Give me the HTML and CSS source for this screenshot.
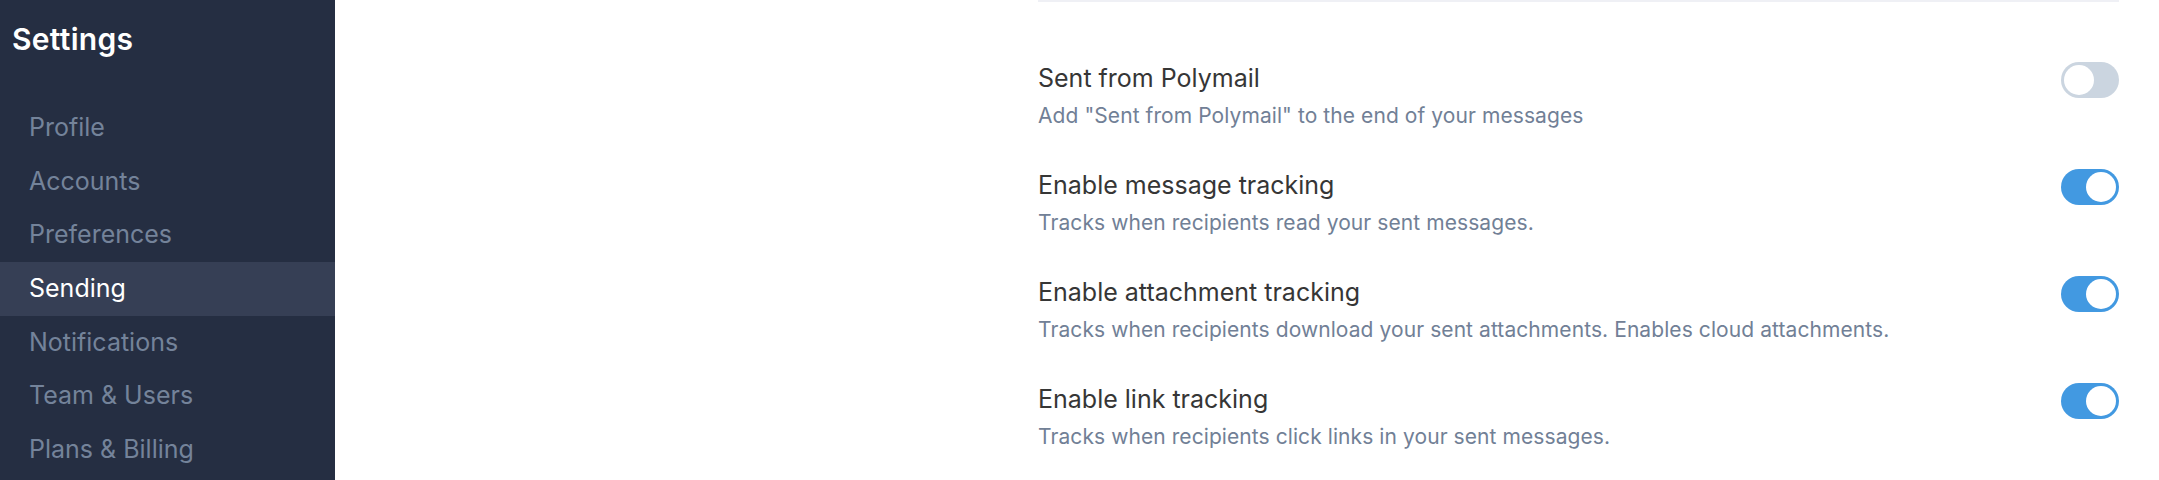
FILE: index.html
```html
<!DOCTYPE html>
<html lang="en">
<head>
<meta charset="utf-8">
<title>Settings</title>
<link rel="stylesheet" href="styles.css">
</head>
<body>
<div class="app">
  <aside class="sidebar">
    <h1 class="sidebar-title">Settings</h1>
    <nav class="nav">
      <a class="nav-item">Profile</a>
      <a class="nav-item">Accounts</a>
      <a class="nav-item">Preferences</a>
      <a class="nav-item active">Sending</a>
      <a class="nav-item">Notifications</a>
      <a class="nav-item">Team &amp; Users</a>
      <a class="nav-item">Plans &amp; Billing</a>
    </nav>
  </aside>
  <main class="main">
    <div class="spacer"></div>
    <section class="panel">
      <div class="divider"></div>
      <div class="rows">
        <div class="row">
          <div class="row-text">
            <div class="row-title">Sent from Polymail</div>
            <div class="row-desc">Add "Sent from Polymail" to the end of your messages</div>
          </div>
          <span class="toggle"><span class="knob"></span></span>
        </div>
        <div class="row">
          <div class="row-text">
            <div class="row-title">Enable message tracking</div>
            <div class="row-desc">Tracks when recipients read your sent messages.</div>
          </div>
          <span class="toggle on"><span class="knob"></span></span>
        </div>
        <div class="row">
          <div class="row-text">
            <div class="row-title">Enable attachment tracking</div>
            <div class="row-desc">Tracks when recipients download your sent attachments. Enables cloud attachments.</div>
          </div>
          <span class="toggle on"><span class="knob"></span></span>
        </div>
        <div class="row">
          <div class="row-text">
            <div class="row-title">Enable link tracking</div>
            <div class="row-desc">Tracks when recipients click links in your sent messages.</div>
          </div>
          <span class="toggle on"><span class="knob"></span></span>
        </div>
      </div>
    </section>
  </main>
</div>
</body>
</html>
```

FILE: styles.css
```css
* { box-sizing: border-box; }
html, body {
  margin: 0;
  padding: 0;
  height: 100%;
  overflow: hidden;
  background: #ffffff;
  font-family: Inter, "Noto Sans", "Liberation Sans", sans-serif;
}
.app {
  display: flex;
  height: 480px;
}
.sidebar {
  width: 335px;
  flex: none;
  background: #252e42;
  padding-top: 21px;
}
.sidebar-title {
  margin: 0;
  padding-left: 12px;
  font-size: 30px;
  line-height: 36px;
  font-weight: 600;
  letter-spacing: 0.3px;
  color: #ffffff;
}
.nav {
  display: flex;
  flex-direction: column;
  margin-top: 44px;
}
.nav-item {
  display: block;
  height: 53.7px;
  line-height: 53.7px;
  padding-left: 29px;
  font-size: 25px;
  color: #74839a;
  text-decoration: none;
}
.nav-item.active {
  background: #363f55;
  color: #ffffff;
}
.main {
  flex: 1;
  display: flex;
  padding-right: 40px;
}
.spacer {
  flex: 1;
}
.panel {
  width: 1081px;
  flex: none;
}
.divider {
  height: 2px;
  background: #eff0f5;
}
.rows {
  display: flex;
  flex-direction: column;
  gap: 36px;
  padding-top: 58px;
}
.row {
  display: flex;
  justify-content: space-between;
  align-items: flex-start;
  height: 71px;
}
.row-title {
  font-size: 25px;
  line-height: 36px;
  color: #363636;
}
.row-desc {
  margin-top: 5px;
  font-size: 21px;
  line-height: 30px;
  letter-spacing: 0.08px;
  color: #718096;
}
.toggle {
  display: flex;
  align-items: center;
  width: 58px;
  height: 36px;
  margin-top: 2px;
  padding: 3px;
  border-radius: 18px;
  background: #cbd5e0;
  flex: none;
}
.toggle.on {
  background: #4299e1;
  justify-content: flex-end;
}
.knob {
  width: 30px;
  height: 30px;
  border-radius: 50%;
  background: #ffffff;
}
```
